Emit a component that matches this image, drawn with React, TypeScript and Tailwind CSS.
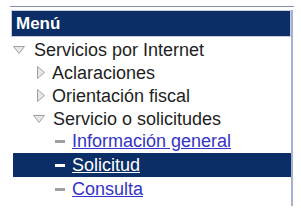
import React from "react";

const TriDown = () => (
  <svg width="12" height="8" viewBox="0 0 12 8" className="shrink-0">
    <path d="M0.5 0.5 L11.5 0.5 L6 7.5 Z" fill="#e8e8e8" stroke="#a0a0a0" strokeWidth="1" />
  </svg>
);
const TriRight = () => (
  <svg width="8" height="13" viewBox="0 0 8 13" className="shrink-0">
    <path d="M0.5 0.5 L7.5 6.5 L0.5 12.5 Z" fill="#e8e8e8" stroke="#a0a0a0" strokeWidth="1" />
  </svg>
);

export default function App() {
  return (
    <div className="w-[301px] h-[213px] bg-white pt-[6px] pl-[10px] font-['Liberation_Sans',Arial,sans-serif]">
      <div className="w-[284px] border-t border-[#8090b0] pt-[3px]">
        <div className="flex flex-col w-[283px] h-[196px] border-r-2 border-[#a7b0d2] pl-[1px]">
          <div className="h-[27px] shrink-0 bg-[#0b2e67] border border-[#c6cde0] flex items-center pl-[4px]">
            <span className="text-white font-bold text-[17px] leading-none">Menú</span>
          </div>
          <div className="flex flex-col pt-[1px] text-[18px] text-[#1e1e1e] leading-none">
            <div className="h-[23px] flex items-center pl-[2px] gap-[9px]">
              <TriDown />
              <span>Servicios por Internet</span>
            </div>
            <div className="h-[23px] flex items-center pl-[26px] gap-[7px]">
              <TriRight />
              <span>Aclaraciones</span>
            </div>
            <div className="h-[23px] flex items-center pl-[26px] gap-[7px]">
              <TriRight />
              <span>Orientación fiscal</span>
            </div>
            <div className="h-[23px] flex items-center pl-[22px] gap-[8px]">
              <TriDown />
              <span>Servicio o solicitudes</span>
            </div>
            <div className="h-[22px] flex items-center pl-[44px] gap-[7px]">
              <span className="w-[10px] h-[3px] bg-[#a0a0a0]" />
              <span className="text-[#3434c8] underline">Información general</span>
            </div>
            <div className="h-[24px] mt-[1px] flex items-center pl-[42px] gap-[7px] bg-[#0b2e67] ml-[2px]">
              <span className="w-[10px] h-[3px] bg-white" />
              <span className="text-white underline">Solicitud</span>
            </div>
            <div className="h-[24px] flex items-center pl-[44px] gap-[7px]">
              <span className="w-[10px] h-[3px] bg-[#a0a0a0]" />
              <span className="text-[#3434c8] underline">Consulta</span>
            </div>
          </div>
        </div>
      </div>
    </div>
  );
}
